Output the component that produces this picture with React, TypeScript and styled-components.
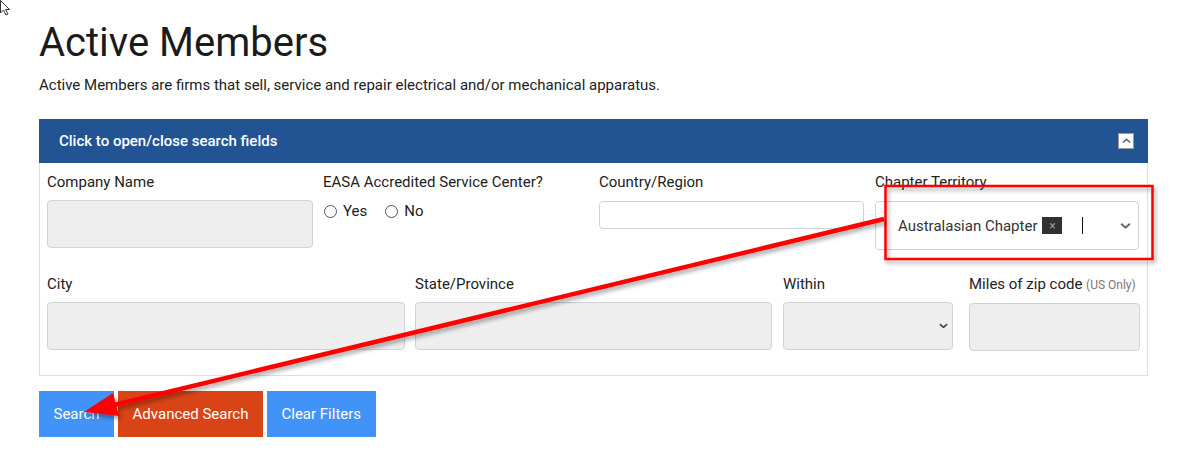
import React from "react";
import styled, { createGlobalStyle } from "styled-components";

const Global = createGlobalStyle`
  html, body { margin: 0; padding: 0; background: #fff; }
  body { font-family: Roboto, "Liberation Sans", sans-serif; color: #212529; }
  * { box-sizing: border-box; }
`;

const Page = styled.div`
  position: relative;
  width: 1179px;
  height: 454px;
  padding: 19px 0 0 39px;
  overflow: hidden;
`;

const Title = styled.h1`
  margin: 0;
  font-size: 40px;
  line-height: 48px;
  font-weight: 400;
  color: #1b1b1b;
`;

const Lead = styled.p`
  margin: 8px 0 0;
  font-size: 15px;
  line-height: 20px;
  color: #222;
`;

const Panel = styled.section`
  margin-top: 24px;
  width: 1109px;
  border: 1px solid #dedede;
  border-top: none;
`;

const PanelHeader = styled.div`
  height: 44px;
  background: #225494;
  color: #fff;
  display: flex;
  align-items: center;
  justify-content: space-between;
  padding: 0 14px 0 20px;
  margin: 0 -1px;
  font-size: 15px;
  font-weight: 500;
`;

const ToggleBox = styled.span`
  width: 16px;
  height: 16px;
  background: #fff;
  border: 1px solid #9a9a9a;
  display: flex;
  align-items: center;
  justify-content: center;
`;

const PanelBody = styled.div`
  padding: 9px 8px 24px 7px;
  display: flex;
  flex-direction: column;
  gap: 24px;
`;

const Row = styled.div<{ $cols: string }>`
  display: grid;
  grid-template-columns: ${(p) => p.$cols};
`;

const Field = styled.div<{ $w: number }>`
  width: ${(p) => p.$w}px;
  display: flex;
  flex-direction: column;
`;

const Label = styled.label`
  font-size: 15px;
  line-height: 20px;
  color: #222;
  margin-bottom: 8px;
  white-space: nowrap;
`;

const Small = styled.span`
  font-size: 12px;
  color: #777;
`;

const Input = styled.div<{ $h: number; $disabled?: boolean; $mt?: number }>`
  height: ${(p) => p.$h}px;
  margin-top: ${(p) => p.$mt ?? 0}px;
  border: 1px solid #cfd3d7;
  border-radius: 4px;
  background: ${(p) => (p.$disabled ? "#eeeeee" : "#fff")};
  display: flex;
  align-items: center;
  position: relative;
`;

const Radios = styled.div`
  display: flex;
  align-items: center;
  height: 22px;
  font-size: 15px;
  color: #222;
`;

const RadioOpt = styled.span`
  display: flex;
  align-items: center;
  gap: 6px;
  margin-right: 17px;
`;

const Circle = styled.span`
  width: 13px;
  height: 13px;
  border-radius: 50%;
  border: 1px solid #555;
  background: #fff;
  margin-left: 1px;
`;

const SelectValue = styled.div`
  display: flex;
  align-items: center;
  padding-left: 22px;
  font-size: 15px;
  color: #333;
  flex: 1;
`;

const Tag = styled.span`
  width: 20px;
  height: 17px;
  margin-left: 5px;
  background: #2f3133;
  color: #999;
  font-size: 12px;
  display: flex;
  align-items: center;
  justify-content: center;
  line-height: 1;
`;

const Caret = styled.span`
  width: 1px;
  height: 17px;
  background: #111;
  margin-left: 20px;
`;

const ChevronWrap = styled.span<{ $right: number }>`
  position: absolute;
  right: ${(p) => p.$right}px;
  top: 50%;
  transform: translateY(-50%);
  display: flex;
`;

const Buttons = styled.div`
  display: flex;
  gap: 4px;
  margin-top: 15px;
`;

const Btn = styled.button<{ $tone: "blue" | "orange" }>`
  height: 46px;
  padding: 0 14.5px;
  border: none;
  border-radius: 0;
  background: ${(p) => (p.$tone === "blue" ? "#4293f7" : "#d94416")};
  color: #fff;
  font-family: Roboto, "Liberation Sans", sans-serif;
  font-size: 15px;
  cursor: pointer;
`;

const Overlay = styled.svg`
  position: absolute;
  left: 0;
  top: 0;
  pointer-events: none;
`;

const Chevron = ({ color, w, up }: { color: string; w: number; up?: boolean }) => (
  <svg width={w} height={w * 0.6} viewBox="0 0 10 6">
    <path
      d={up ? "M1 5 L5 1.5 L9 5" : "M1 1 L5 4.5 L9 1"}
      fill="none"
      stroke={color}
      strokeWidth={1.8}
    />
  </svg>
);

export default function App() {
  return (
    <>
      <Global />
      <Page>
        <Title>Active Members</Title>
        <Lead>
          Active Members are firms that sell, service and repair electrical and/or mechanical apparatus.
        </Lead>
        <Panel>
          <PanelHeader>
            <span>Click to open/close search fields</span>
            <ToggleBox>
              <Chevron color="#666" w={9} up />
            </ToggleBox>
          </PanelHeader>
          <PanelBody>
            <Row $cols="276px 276px 276px 264px">
              <Field $w={266}>
                <Label>Company Name</Label>
                <Input $h={48} $disabled />
              </Field>
              <Field $w={266}>
                <Label>EASA Accredited Service Center?</Label>
                <Radios>
                  <RadioOpt>
                    <Circle />
                    Yes
                  </RadioOpt>
                  <RadioOpt>
                    <Circle />
                    No
                  </RadioOpt>
                </Radios>
              </Field>
              <Field $w={265}>
                <Label>Country/Region</Label>
                <Input $h={28} $mt={1} />
              </Field>
              <Field $w={264}>
                <Label>Chapter Territory</Label>
                <Input $h={49} $mt={1}>
                  <SelectValue>
                    Australasian Chapter
                    <Tag>×</Tag>
                    <Caret />
                  </SelectValue>
                  <ChevronWrap $right={7}>
                    <Chevron color="#666" w={11} />
                  </ChevronWrap>
                </Input>
              </Field>
            </Row>
            <Row $cols="368px 368px 186px 170px">
              <Field $w={358}>
                <Label>City</Label>
                <Input $h={48} $disabled />
              </Field>
              <Field $w={357}>
                <Label>State/Province</Label>
                <Input $h={48} $disabled />
              </Field>
              <Field $w={170}>
                <Label>Within</Label>
                <Input $h={48} $disabled>
                  <ChevronWrap $right={4}>
                    <Chevron color="#444" w={9} />
                  </ChevronWrap>
                </Input>
              </Field>
              <Field $w={171}>
                <Label>
                  Miles of zip code <Small>(US Only)</Small>
                </Label>
                <Input $h={48} $disabled />
              </Field>
            </Row>
          </PanelBody>
        </Panel>
        <Buttons>
          <Btn $tone="blue">Search</Btn>
          <Btn $tone="orange">Advanced Search</Btn>
          <Btn $tone="blue">Clear Filters</Btn>
        </Buttons>

        <Overlay width={1179} height={454} viewBox="0 0 1179 454">
          <defs>
            <filter id="sh" x="-10%" y="-10%" width="130%" height="140%">
              <feDropShadow dx="2" dy="3" stdDeviation="2" floodColor="#000" floodOpacity="0.35" />
            </filter>
          </defs>
          <rect x={885.5} y={186} width={267} height={73} fill="none" stroke="#f00" strokeWidth={2.5} filter="url(#sh)" />
          <g filter="url(#sh)">
            <line x1={884} y1={219} x2={114} y2={405} stroke="#f00" strokeWidth={4.5} />
            <polygon points="84,412 113,393 119,416" fill="#f00" />
          </g>
          <path
            d="M0.5 0.5 L0.5 13 L3.5 10 L6 15 L8 14 L5.5 9.5 L9.5 9.5 Z"
            fill="#fff"
            stroke="#333"
            strokeWidth={1}
          />
        </Overlay>
      </Page>
    </>
  );
}
